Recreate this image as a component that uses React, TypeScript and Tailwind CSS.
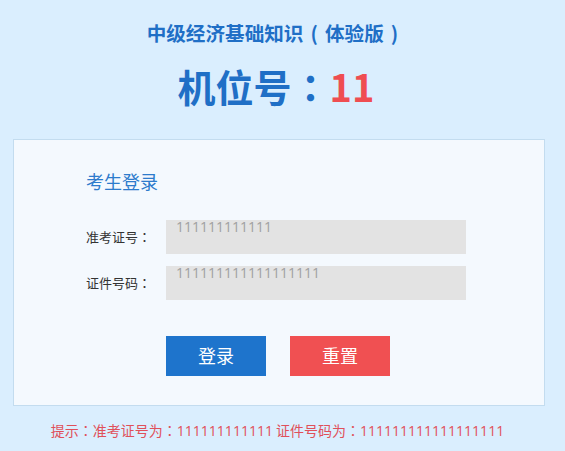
import React from "react";

function C() {
  return <span className="font-['Noto_Sans_CJK_TC',sans-serif]">：</span>;
}

function D({ children }: { children: React.ReactNode }) {
  return <span className="font-['Open_Sans',sans-serif]">{children}</span>;
}

export default function App() {
  return (
    <div
      className="w-[565px] h-[451px] overflow-hidden bg-[#daeefe] [font-kerning:none]"
      style={{ fontFamily: '"Microsoft YaHei", "Noto Sans CJK SC", "Noto Sans", sans-serif' }}
    >
      <div className="w-[552px] flex flex-col items-center pt-[23px]">
        <h1 className="text-[19.6px] leading-[19.6px] font-bold text-[#1f6fc6] whitespace-nowrap">
          中级经济基础知识
          <span className="inline-block w-[1.1em] text-center">(</span>
          体验版
          <span className="inline-block w-[1.1em] text-center">)</span>
        </h1>
        <div className="mt-[24px] text-[38px] leading-[38px] font-bold text-[#1f6fc6]">
          机位号<C />
          <span className="text-[#ef4d51]">11</span>
        </div>
      </div>

      <div className="mt-[34px] ml-[13px] w-[532px] h-[267px] border border-[#c3dcef] bg-[#f4f9fe] pl-[72px] pt-[32px]">
        <div className="text-[18px] leading-[18px] text-[#2d7bcc]">考生登录</div>

        <div className="mt-[30px] flex flex-col gap-[12px]">
          <div className="flex items-center">
            <span className="w-[80px] text-[13px] text-[#333333]">
              准考证号<C />
            </span>
            <div className="w-[300px] h-[34px] bg-[#e3e3e3] pl-[10px] text-[14px] leading-[14px] text-[#a0a0a0] font-['Open_Sans',sans-serif]">
              111111111111
            </div>
          </div>
          <div className="flex items-center">
            <span className="w-[80px] text-[13px] text-[#333333]">
              证件号码<C />
            </span>
            <div className="w-[300px] h-[34px] bg-[#e3e3e3] pl-[10px] text-[14px] leading-[14px] text-[#a0a0a0] font-['Open_Sans',sans-serif]">
              111111111111111111
            </div>
          </div>
        </div>

        <div className="mt-[36px] ml-[80px] flex gap-[24px]">
          <button className="w-[100px] h-[40px] bg-[#1e74cc] text-white text-[18px] flex items-center justify-center">
            登录
          </button>
          <button className="w-[100px] h-[40px] bg-[#f05052] text-white text-[18px] flex items-center justify-center">
            重置
          </button>
        </div>
      </div>

      <div className="w-[555px] mt-[17px] text-center text-[14px] leading-[14px] text-[#e0505a] whitespace-nowrap">
        提示<C />准考证号为<C />
        <D>111111111111</D> 证件号码为<C />
        <D>111111111111111111</D>
      </div>
    </div>
  );
}
